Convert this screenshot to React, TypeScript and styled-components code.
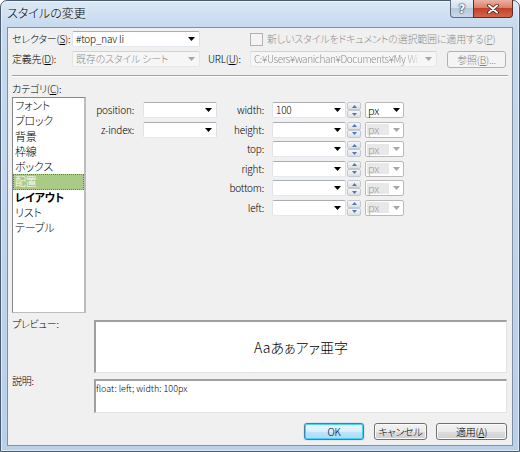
import React from "react";
import styled, { createGlobalStyle } from "styled-components";

const GlobalStyle = createGlobalStyle`
  html, body { margin: 0; padding: 0; background: #ffffff; }
  body {
    font-family: "Noto Sans CJK JP", "Liberation Sans", sans-serif;
    font-feature-settings: "palt";
  }
`;

const Frame = styled.div`
  width: 520px;
  height: 452px;
  box-sizing: border-box;
  border: 1px solid #4a5b70;
  border-radius: 7px 7px 0 0;
  background: linear-gradient(#dbe8f6, #c6d9ee 26px, #b9d0e9);
  box-shadow: inset 0 0 0 1px rgba(255, 255, 255, 0.55);
  padding: 0 6px 5px 6px;
  display: flex;
  flex-direction: column;
  font-size: 10px;
  font-weight: 300;
  letter-spacing: -0.2px;
  color: #000;
`;

const TitleBar = styled.div`
  height: 26px;
  display: flex;
  align-items: flex-start;
`;

const TitleText = styled.div`
  font-size: 12px;
  letter-spacing: 0;
  line-height: 24px;
  color: #000;
  text-shadow: 0 0 6px rgba(255, 255, 255, 0.9);
`;

const CaptionButtons = styled.div`
  margin-left: auto;
  margin-top: -1px;
  display: flex;
`;

const HelpButton = styled.div`
  width: 23px;
  height: 18px;
  box-sizing: border-box;
  border: 1px solid #5c6c80;
  border-right: none;
  border-top: none;
  border-radius: 0 0 0 4px;
  background: linear-gradient(#e8eff7, #d3dfec 45%, #b7c9dc 50%, #c8d8ea);
  display: flex;
  align-items: center;
  justify-content: center;
  color: #ffffff;
  font: bold 12px "DejaVu Sans", sans-serif;
  text-shadow: 0 0 1px #2d3c4f, 0 0 1px #2d3c4f, 0 0 2px #2d3c4f;
`;

const CloseButton = styled.div`
  width: 40px;
  height: 18px;
  box-sizing: border-box;
  border: 1px solid #5a2f2a;
  border-top: none;
  border-radius: 0 0 4px 0;
  background: linear-gradient(#eab2a3, #d98068 45%, #c4402b 50%, #d2664c);
  display: flex;
  align-items: center;
  justify-content: center;
`;

const Client = styled.div`
  flex: 1;
  background: #f0f0f0;
  border: 1px solid #7f90a5;
  display: flex;
  flex-direction: column;
  padding: 0 5px 0 4px;
`;

const FormRow = styled.div<{ $top: number }>`
  display: flex;
  align-items: center;
  height: 16px;
  margin-top: ${(p) => p.$top}px;
`;

const FieldLabel = styled.div<{ $w: number; $ml?: number }>`
  width: ${(p) => p.$w}px;
  margin-left: ${(p) => p.$ml ?? 0}px;
  line-height: 16px;
  white-space: nowrap;
`;

const ComboBox = styled.div<{ $w: number; $disabled?: boolean }>`
  width: ${(p) => p.$w}px;
  height: 16px;
  box-sizing: border-box;
  border: 1px solid;
  border-color: ${(p) =>
    p.$disabled ? "#cfd2d6 #e2e4e7 #e6e8eb #e2e4e7" : "#abadb3 #dbdfe6 #e3e9ef #e2e3ea"};
  border-radius: 2px;
  background: ${(p) => (p.$disabled ? "#f6f6f6" : "#ffffff")};
  color: ${(p) => (p.$disabled ? "#8d8d8d" : "#000")};
  display: flex;
  align-items: center;
  padding: 0 4px 0 3px;
  overflow: hidden;
`;

const ComboText = styled.span`
  flex: 1;
  min-width: 0;
  white-space: nowrap;
  overflow: hidden;
  line-height: 14px;
`;

const FadeText = styled(ComboText)`
  letter-spacing: -0.4px;
  -webkit-mask-image: linear-gradient(to right, #000 90%, transparent);
  mask-image: linear-gradient(to right, #000 90%, transparent);
`;

const ArrowBox = styled.span`
  width: 7px;
  margin-left: 4px;
  display: flex;
  align-items: center;
`;

const DropArrow = ({ muted }: { muted?: boolean }) => (
  <ArrowBox>
    <svg width="7" height="4" viewBox="0 0 7 4">
      <polygon points="0,0 7,0 3.5,4" fill={muted ? "#a6a6a6" : "#000"} />
    </svg>
  </ArrowBox>
);

const CheckBox = styled.div`
  width: 13px;
  height: 13px;
  box-sizing: border-box;
  margin-left: 50px;
  border: 1px solid #b1b1b1;
  background: #f4f4f4;
`;

const CheckLabel = styled.div`
  margin-left: 4px;
  color: #8d8d8d;
  white-space: nowrap;
  line-height: 16px;
`;

const SmallButton = styled.div`
  width: 59px;
  height: 17px;
  box-sizing: border-box;
  margin-left: 10px;
  border: 1px solid #adb2b5;
  border-radius: 3px;
  background: #f4f4f4;
  color: #838383;
  display: flex;
  align-items: center;
  justify-content: center;
`;

const Separator = styled.div`
  width: 496px;
  height: 0;
  margin-top: 8px;
  border-top: 1px solid #a0a0a0;
  border-bottom: 1px solid #ffffff;
`;

const MiddleArea = styled.div`
  display: flex;
  margin-top: 5px;
`;

const CategoryColumn = styled.div`
  display: flex;
  flex-direction: column;
`;

const SectionLabel = styled.div`
  line-height: 14px;
  white-space: nowrap;
`;

const CategoryList = styled.ul`
  width: 74px;
  height: 216px;
  box-sizing: border-box;
  margin: 1px 0 0 0;
  padding: 0;
  list-style: none;
  background: #ffffff;
  border: 1px solid #828790;
  border-right: 2px solid #bdbdbd;
  border-bottom: 1px solid #bdbdbd;
`;

const CategoryItem = styled.li<{ $selected?: boolean; $bold?: boolean }>`
  height: 15.3px;
  line-height: 15px;
  box-sizing: border-box;
  padding-left: 2px;
  white-space: nowrap;
  font-size: 11px;
  font-weight: ${(p) => (p.$bold ? 700 : 300)};
  background: ${(p) => (p.$selected ? "#a9cb85" : "transparent")};
  color: ${(p) => (p.$selected ? "#ffffff" : "#000")};
  outline: ${(p) => (p.$selected ? "1px dotted #6b7a5a" : "none")};
  outline-offset: -1px;
`;

const PropsArea = styled.div`
  margin-left: 8px;
  margin-top: 20px;
  display: grid;
  grid-template-columns: 49px 74px 55px 74px 15px 43px;
  grid-auto-rows: 16px;
  row-gap: 3.5px;
  align-content: start;
  align-items: center;
`;

const PropLabel = styled.div<{ $pad: number }>`
  text-align: right;
  padding-right: ${(p) => p.$pad}px;
  line-height: 16px;
  white-space: nowrap;
`;

const Spinner = styled.div`
  justify-self: end;
  width: 14px;
  height: 16px;
  display: flex;
  flex-direction: column;
`;

const SpinHalf = styled.div`
  flex: 1;
  box-sizing: border-box;
  border: 1px solid #c2c9d3;
  border-radius: 2px;
  background: linear-gradient(#f7f7f7, #dcdfe3);
  display: flex;
  align-items: center;
  justify-content: center;
`;

const UnitCombo = styled.div<{ $disabled?: boolean }>`
  justify-self: end;
  width: 39px;
  height: 16px;
  box-sizing: border-box;
  border: 1px solid #b9b9b9;
  border-radius: 2px;
  background: #ffffff;
  display: flex;
  align-items: center;
  padding: 0 3px 0 1px;
  color: ${(p) => (p.$disabled ? "#9a9a9a" : "#000")};
`;

const UnitText = styled.span<{ $disabled?: boolean }>`
  width: 21px;
  height: 11px;
  line-height: 11px;
  padding-left: 1px;
  font-size: 11px;
  background: ${(p) => (p.$disabled ? "#e8e8e8" : "transparent")};
`;

const UnitArrow = styled.span`
  margin-left: auto;
  display: flex;
`;

const SectionRow = styled.div<{ $mt: number }>`
  display: flex;
  margin-top: ${(p) => p.$mt}px;
`;

const SideLabel = styled.div<{ $mt: number }>`
  width: 82px;
  line-height: 12px;
  margin-top: ${(p) => p.$mt}px;
  white-space: nowrap;
`;

const SunkenBox = styled.div<{ $h: number }>`
  width: 413px;
  height: ${(p) => p.$h}px;
  box-sizing: border-box;
  background: #ffffff;
  border-top: 2px solid #a0a0a0;
  border-left: 2px solid #a0a0a0;
  border-right: 1px solid #e3e3e3;
  border-bottom: 1px solid #e3e3e3;
`;

const PreviewBox = styled(SunkenBox)`
  display: flex;
  align-items: center;
  justify-content: center;
  font-size: 14px;
  letter-spacing: 0;
  padding-bottom: 1px;
`;

const DescBox = styled(SunkenBox)`
  font-size: 9px;
  line-height: 11px;
  letter-spacing: 0;
  padding: 2px 0 0 0;
`;

const ButtonBar = styled.div`
  display: flex;
  justify-content: flex-end;
  margin-top: 10px;
`;

const DialogButton = styled.div<{ $w: number; $ml?: number; $default?: boolean }>`
  width: ${(p) => p.$w}px;
  height: 17px;
  margin-left: ${(p) => p.$ml ?? 0}px;
  box-sizing: border-box;
  border: 1px solid ${(p) => (p.$default ? "#3c7fb1" : "#707070")};
  border-radius: 3px;
  background: ${(p) =>
    p.$default
      ? "linear-gradient(#eaf6fd, #d9f0fc 50%, #bee6fd 50%, #a7d9f5)"
      : "linear-gradient(#f2f2f2, #ebebeb 50%, #dddddd 50%, #cfcfcf)"};
  box-shadow: ${(p) =>
    p.$default ? "inset 0 0 0 1px #48d2f8, 0 0 1px #3c7fb1" : "inset 0 0 0 1px #fcfcfc"};
  display: flex;
  align-items: center;
  justify-content: center;
  line-height: 15px;
`;

const SpinUp = () => (
  <svg width="5" height="3" viewBox="0 0 5 3">
    <polygon points="0,3 5,3 2.5,0" fill="#4f77b0" />
  </svg>
);

const SpinDown = () => (
  <svg width="5" height="3" viewBox="0 0 5 3">
    <polygon points="0,0 5,0 2.5,3" fill="#4f77b0" />
  </svg>
);

const categories = [
  { label: "フォント" },
  { label: "ブロック" },
  { label: "背景" },
  { label: "枠線" },
  { label: "ボックス" },
  { label: "配置", selected: true },
  { label: "レイアウト", bold: true },
  { label: "リスト" },
  { label: "テーブル" },
];

const offsetRows = [
  { label: "width:", value: "100", active: true, left: { label: "position:" } },
  { label: "height:", value: "", active: false, left: { label: "z-index:" } },
  { label: "top:", value: "", active: false },
  { label: "right:", value: "", active: false },
  { label: "bottom:", value: "", active: false },
  { label: "left:", value: "", active: false },
];

const App: React.FC = () => {
  return (
    <>
      <GlobalStyle />
      <Frame>
        <TitleBar>
          <TitleText>スタイルの変更</TitleText>
          <CaptionButtons>
            <HelpButton>?</HelpButton>
            <CloseButton>
              <svg width="12" height="10" viewBox="0 0 12 10">
                <path d="M2 1.5 L10 8.5 M10 1.5 L2 8.5" stroke="#4a1e18" strokeWidth="3.6" strokeLinecap="round" />
                <path d="M2 1.5 L10 8.5 M10 1.5 L2 8.5" stroke="#ffffff" strokeWidth="2" strokeLinecap="round" />
              </svg>
            </CloseButton>
          </CaptionButtons>
        </TitleBar>

        <Client>
          <FormRow $top={3}>
            <FieldLabel $w={60}>
              セレクター(<u>S</u>):
            </FieldLabel>
            <ComboBox $w={128}>
              <ComboText>#top_nav li</ComboText>
              <DropArrow />
            </ComboBox>
            <CheckBox />
            <CheckLabel>
              新しいスタイルをドキュメントの選択範囲に適用する(<u>P</u>)
            </CheckLabel>
          </FormRow>

          <FormRow $top={4}>
            <FieldLabel $w={60}>
              定義先(<u>D</u>):
            </FieldLabel>
            <ComboBox $w={128} $disabled>
              <ComboText>既存のスタイル シート</ComboText>
              <DropArrow muted />
            </ComboBox>
            <FieldLabel $w={42} $ml={8}>
              URL(<u>U</u>):
            </FieldLabel>
            <ComboBox $w={187} $disabled>
              <FadeText>C:¥Users¥wanichan¥Documents¥My Wi</FadeText>
              <DropArrow muted />
            </ComboBox>
            <SmallButton>
              参照(<u>B</u>)...
            </SmallButton>
          </FormRow>

          <Separator />

          <MiddleArea>
            <CategoryColumn>
              <SectionLabel>
                カテゴリ(<u>C</u>):
              </SectionLabel>
              <CategoryList>
                {categories.map((c) => (
                  <CategoryItem key={c.label} $selected={c.selected} $bold={c.bold}>
                    {c.label}
                  </CategoryItem>
                ))}
              </CategoryList>
            </CategoryColumn>

            <PropsArea>
              {offsetRows.map((r) => (
                <React.Fragment key={r.label}>
                  {r.left ? (
                    <>
                      <PropLabel $pad={9}>{r.left.label}</PropLabel>
                      <ComboBox $w={74}>
                        <ComboText />
                        <DropArrow />
                      </ComboBox>
                    </>
                  ) : (
                    <>
                      <span />
                      <span />
                    </>
                  )}
                  <PropLabel $pad={8}>{r.label}</PropLabel>
                  <ComboBox $w={74}>
                    <ComboText>{r.value}</ComboText>
                    <DropArrow />
                  </ComboBox>
                  <Spinner>
                    <SpinHalf>
                      <SpinUp />
                    </SpinHalf>
                    <SpinHalf>
                      <SpinDown />
                    </SpinHalf>
                  </Spinner>
                  <UnitCombo $disabled={!r.active}>
                    <UnitText $disabled={!r.active}>px</UnitText>
                    <UnitArrow>
                      <svg width="7" height="4" viewBox="0 0 7 4">
                        <polygon points="0,0 7,0 3.5,4" fill={r.active ? "#000" : "#a6a6a6"} />
                      </svg>
                    </UnitArrow>
                  </UnitCombo>
                </React.Fragment>
              ))}
            </PropsArea>
          </MiddleArea>

          <SectionRow $mt={7}>
            <SideLabel $mt={-2}>プレビュー:</SideLabel>
            <PreviewBox $h={53}>Aaあぁアァ亜字</PreviewBox>
          </SectionRow>

          <SectionRow $mt={6}>
            <SideLabel $mt={-4}>説明:</SideLabel>
            <DescBox $h={34}>float: left; width: 100px</DescBox>
          </SectionRow>

          <ButtonBar>
            <DialogButton $w={60} $default>
              OK
            </DialogButton>
            <DialogButton $w={53} $ml={10}>
              キャンセル
            </DialogButton>
            <DialogButton $w={71} $ml={9}>
              適用(<u>A</u>)
            </DialogButton>
          </ButtonBar>
        </Client>
      </Frame>
    </>
  );
};

export default App;
